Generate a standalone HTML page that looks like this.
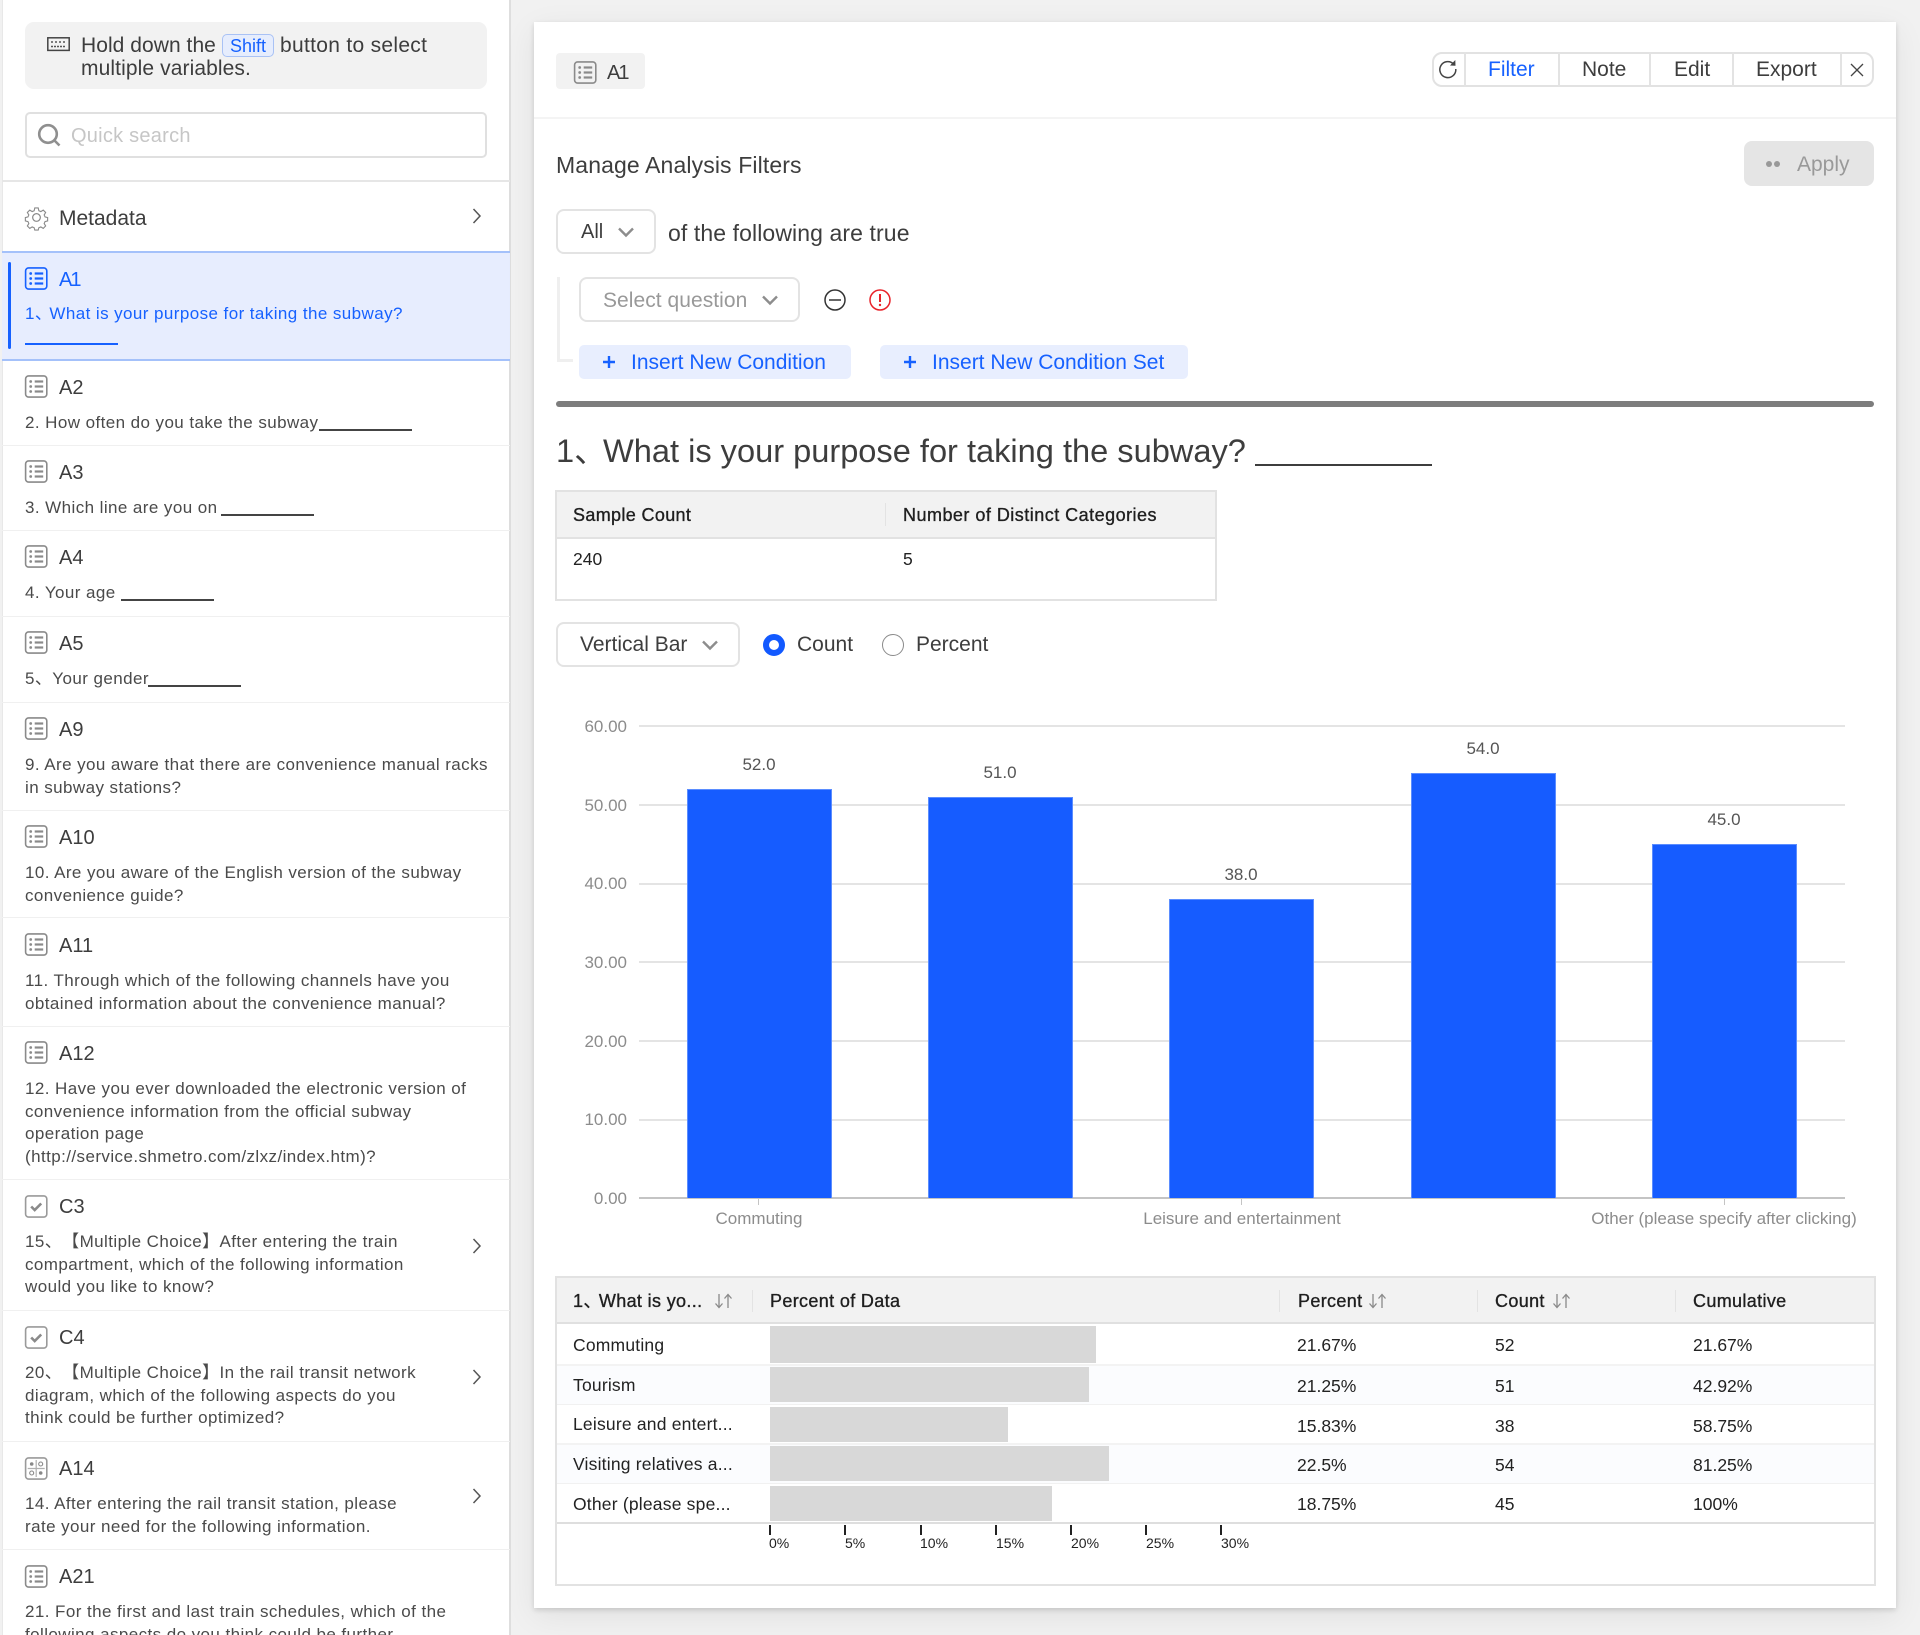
<!DOCTYPE html>
<html><head><meta charset="utf-8"><title>A1</title>
<style>
html,body{margin:0;padding:0}
html{height:1635px;overflow:hidden;background:#f1f1f1}
body{position:relative;width:1920px;height:1635px;overflow:hidden;background:#f1f1f1;font-family:"Liberation Sans","Noto Sans CJK SC",sans-serif;color:#3d3d3d;filter:blur(.3px);text-spacing-trim:space-all}
div,span.a{position:absolute;box-sizing:border-box}
.t{white-space:nowrap;height:26px;line-height:26px}
.h{font-size:20px;color:#3d3d3d;left:59px;margin-top:1px}
.q{font-size:17px;left:25px;letter-spacing:.42px;color:#4a4a4a;margin-top:1px}
.s{height:1px;background:#f0f0f0;left:2px;width:508px}
.m{-webkit-text-stroke:.35px currentColor;color:#1f1f1f;font-size:18px;letter-spacing:.35px}
.c{font-size:17.5px;color:#222}
.g{left:639px;width:1206px;height:2px;background:#e4e4e4}
.b{background:#165cff;border:1px solid #5b8dff;border-bottom:0}
.yl{left:570px;width:57px;text-align:right;color:#8c8c8c;font-size:17px;margin-top:1px}
.v{width:80px;text-align:center;color:#555;font-size:17px;margin-top:1px}
.xl{width:300px;text-align:center;color:#8c8c8c;font-size:17px}
.sel{border:2px solid #e3e3e3;border-radius:8px;background:#fff}
.sp{width:2px;background:#e3e3e3}
.bar{left:770px;background:#d8d8d8}
.tk{width:2px;height:10px;top:1525px;background:#222}
.tl{font-size:14px;color:#222;top:1530px}
.ri{left:556px;width:1319px;height:39px;background:#fbfcfe}
svg{position:absolute;overflow:visible}
</style></head>
<body>
<svg width="0" height="0" style="position:absolute">
<defs>
<symbol id="li" viewBox="-.7 0 23 23" overflow="visible"><rect x=".9" y=".9" width="21.2" height="21.2" rx="3" fill="none" stroke="currentColor" stroke-width="1.6"/><g fill="currentColor"><circle cx="6" cy="6.5" r="1.4"/><circle cx="6" cy="11.5" r="1.4"/><circle cx="6" cy="16.5" r="1.4"/><rect x="10" y="5.4" width="8.5" height="2.2"/><rect x="10" y="10.4" width="8.5" height="2.2"/><rect x="10" y="15.4" width="8.5" height="2.2"/></g></symbol>
<symbol id="ck" viewBox="-.7 0 23 23" overflow="visible"><rect x=".9" y=".9" width="21.2" height="21.2" rx="3" fill="none" stroke="#9a9a9a" stroke-width="1.6"/><path d="M6.5 11.5l3.5 3.5 6.5-6.5" fill="none" stroke="#8a8a8a" stroke-width="2.6"/></symbol>
<symbol id="gr" viewBox="-.7 0 23 23" overflow="visible"><rect x=".9" y=".9" width="21.2" height="21.2" rx="3" fill="none" stroke="#9a9a9a" stroke-width="1.6"/><path d="M11.5 3v17M3 11.5h17" stroke="#b0b0b0" stroke-width="1.2"/><circle cx="7" cy="7" r="1.8" fill="#888"/><circle cx="16" cy="7" r="2" fill="none" stroke="#888" stroke-width="1.1"/><circle cx="7" cy="16" r="2" fill="none" stroke="#888" stroke-width="1.1"/><circle cx="16" cy="16" r="1.8" fill="#888"/></symbol>
<symbol id="cv" viewBox="0 0 16 16" overflow="visible"><path d="M1 4.500l7 7 7-7" fill="none" stroke="#8d8d8d" stroke-width="2.400"/></symbol>
<symbol id="rt" viewBox="0 0 12 18"><path d="M2.5 2l6.5 7-6.5 7" fill="none" stroke="#555" stroke-width="1.5"/></symbol>
<symbol id="so" viewBox="0 0 20 16"><path d="M5 1v13M1.5 10.5L5 14.500l3.500-4M14 15V2M10.500 5.500L14 1.500l3.500 4" fill="none" stroke="#8a8a8a" stroke-width="1.3"/></symbol>
</defs></svg>

<!-- SIDEBAR -->
<div style="left:2px;top:0;width:509px;height:1635px;background:#fff;border-right:2px solid #dedede;border-left:1px solid #e8e8e8"></div>
<div style="left:25px;top:22px;width:462px;height:67px;background:#f2f2f2;border-radius:9px"></div>
<svg style="left:47px;top:37px" width="23" height="15" viewBox="0 0 23 15"><rect x=".8" y=".8" width="21.4" height="12.6" fill="none" stroke="#444" stroke-width="1.5"/><path d="M4 5h2M8 5h2M12 5h2M16 5h3M4 9.500h15" stroke="#555" stroke-width="1.500" stroke-dasharray="2 1"/></svg>
<div class="t" style="left:81px;top:33px;font-size:21px;letter-spacing:.05px">Hold down the</div>
<div class="t" style="left:222px;top:34px;width:52px;height:23px;line-height:22px;background:#e6edfd;border:1.500px solid #a9c2f5;border-radius:5px;color:#1661ff;font-size:18px;text-align:center">Shift</div>
<div class="t" style="left:280px;top:33px;font-size:21px;letter-spacing:.3px">button to select</div>
<div class="t" style="left:81px;top:56px;font-size:21px;letter-spacing:.1px">multiple variables.</div>

<div style="left:25px;top:112px;width:462px;height:46px;border:2px solid #e0e0e0;border-radius:5px;background:#fff"></div>
<svg style="left:37px;top:123px" width="24" height="24" viewBox="0 0 24 24"><circle cx="11" cy="11" r="8.800" fill="none" stroke="#8f8f8f" stroke-width="2.600"/><path d="M17.500 17.500l5 5" stroke="#8f8f8f" stroke-width="2.600"/></svg>
<div class="t" style="left:71px;top:123px;font-size:20px;letter-spacing:.25px;color:#c6c6c6">Quick search</div>
<div style="left:2px;top:180px;width:508px;height:2px;background:#e6e6e6"></div>

<svg style="left:25px;top:205px" width="23" height="24" viewBox="0 0 24 24"><path d="M10 1.500h4l.7 3.200 2.300 1 2.800-1.700 2.800 2.800-1.700 2.800 1 2.300 3 .7v4l-3 .7-1 2.300 1.700 2.800-2.800 2.800-2.800-1.700-2.300 1-.7 2.700h-4l-.7-2.700-2.300-1-2.800 1.700-2.800-2.800 1.700-2.800-1-2.300-3-.7v-4l3-.7 1-2.300-1.700-2.800 2.800-2.800 2.800 1.700 2.300-1z" transform="translate(1.200 1.200) scale(.9)" fill="none" stroke="#8a8a8a" stroke-width="1.300"/><circle cx="12" cy="12.500" r="4" fill="none" stroke="#8a8a8a" stroke-width="1.300"/></svg>
<div class="t" style="left:59px;top:205px;font-size:21px;color:#3d3d3d;margin-top:1px">Metadata</div>
<svg style="left:471px;top:207px" width="12" height="18"><use href="#rt"/></svg>

<!-- A1 -->
<div style="left:2px;top:251px;width:508px;height:110px;background:#e7edfe;border-top:2px solid #a4c1fa;border-bottom:2px solid #a4c1fa"></div>
<div style="left:8px;top:262px;width:3px;height:87px;background:#1661ff;border-radius:2px"></div>
<svg style="left:24px;top:267px;color:#1661ff" width="23" height="23"><use href="#li"/></svg>
<div class="t h" style="top:266px;color:#1661ff;letter-spacing:-2px">A1</div>
<div class="t q" style="top:300px;color:#1661ff">1<span style="letter-spacing:-2.500px">、</span>What is your purpose for taking the subway?</div>
<div style="left:25px;top:343px;width:93px;height:2px;background:#1661ff"></div>

<svg style="left:24px;top:375px;color:#8a8a8a" width="23" height="23"><use href="#li"/></svg>
<div class="t h" style="top:374px">A2</div>
<div class="t q" style="top:409px">2. How often do you take the subway</div>
<div style="left:319px;top:429px;width:93px;height:1.500px;background:#444"></div>
<div class="s" style="top:445px"></div>

<svg style="left:24px;top:460px;color:#8a8a8a" width="23" height="23"><use href="#li"/></svg>
<div class="t h" style="top:459px">A3</div>
<div class="t q" style="top:494px">3. Which line are you on</div>
<div style="left:221px;top:514px;width:93px;height:1.500px;background:#444"></div>
<div class="s" style="top:530px"></div>

<svg style="left:24px;top:545px;color:#8a8a8a" width="23" height="23"><use href="#li"/></svg>
<div class="t h" style="top:544px">A4</div>
<div class="t q" style="top:579px">4. Your age</div>
<div style="left:121px;top:599px;width:93px;height:1.500px;background:#444"></div>
<div class="s" style="top:616px"></div>

<svg style="left:24px;top:631px;color:#8a8a8a" width="23" height="23"><use href="#li"/></svg>
<div class="t h" style="top:630px">A5</div>
<div class="t q" style="top:665px">5、Your gender</div>
<div style="left:148px;top:685px;width:93px;height:1.500px;background:#444"></div>
<div class="s" style="top:702px"></div>

<svg style="left:24px;top:717px;color:#8a8a8a" width="23" height="23"><use href="#li"/></svg>
<div class="t h" style="top:716px">A9</div>
<div class="t q" style="top:751px">9. Are you aware that there are convenience manual racks</div>
<div class="t q" style="top:774px">in subway stations?</div>
<div class="s" style="top:810px"></div>

<svg style="left:24px;top:825px;color:#8a8a8a" width="23" height="23"><use href="#li"/></svg>
<div class="t h" style="top:824px">A10</div>
<div class="t q" style="top:859px">10. Are you aware of the English version of the subway</div>
<div class="t q" style="top:882px">convenience guide?</div>
<div class="s" style="top:917px"></div>

<svg style="left:24px;top:933px;color:#8a8a8a" width="23" height="23"><use href="#li"/></svg>
<div class="t h" style="top:932px">A11</div>
<div class="t q" style="top:967px">11. Through which of the following channels have you</div>
<div class="t q" style="top:990px">obtained information about the convenience manual?</div>
<div class="s" style="top:1026px"></div>

<svg style="left:24px;top:1041px;color:#8a8a8a" width="23" height="23"><use href="#li"/></svg>
<div class="t h" style="top:1040px">A12</div>
<div class="t q" style="top:1075px">12. Have you ever downloaded the electronic version of</div>
<div class="t q" style="top:1098px">convenience information from the official subway</div>
<div class="t q" style="top:1120px">operation page</div>
<div class="t q" style="top:1143px">(http://service.shmetro.com/zlxz/index.htm)?</div>
<div class="s" style="top:1179px"></div>

<svg style="left:24px;top:1195px" width="23" height="23"><use href="#ck"/></svg>
<div class="t h" style="top:1193px">C3</div>
<div class="t q" style="top:1228px">15、【Multiple Choice】After entering the train</div>
<div class="t q" style="top:1251px">compartment, which of the following information</div>
<div class="t q" style="top:1273px">would you like to know?</div>
<svg style="left:471px;top:1237px" width="12" height="18"><use href="#rt"/></svg>
<div class="s" style="top:1310px"></div>

<svg style="left:24px;top:1326px" width="23" height="23"><use href="#ck"/></svg>
<div class="t h" style="top:1324px">C4</div>
<div class="t q" style="top:1359px">20、【Multiple Choice】In the rail transit network</div>
<div class="t q" style="top:1382px">diagram, which of the following aspects do you</div>
<div class="t q" style="top:1404px">think could be further optimized?</div>
<svg style="left:471px;top:1368px" width="12" height="18"><use href="#rt"/></svg>
<div class="s" style="top:1441px"></div>

<svg style="left:24px;top:1457px" width="23" height="23"><use href="#gr"/></svg>
<div class="t h" style="top:1455px">A14</div>
<div class="t q" style="top:1490px">14. After entering the rail transit station, please</div>
<div class="t q" style="top:1513px">rate your need for the following information.</div>
<svg style="left:471px;top:1487px" width="12" height="18"><use href="#rt"/></svg>
<div class="s" style="top:1549px"></div>

<svg style="left:24px;top:1565px;color:#8a8a8a" width="23" height="23"><use href="#li"/></svg>
<div class="t h" style="top:1563px">A21</div>
<div class="t q" style="top:1598px">21. For the first and last train schedules, which of the</div>
<div class="t q" style="top:1621px">following aspects do you think could be further</div>

<!-- MAIN PANEL -->
<div style="left:534px;top:22px;width:1362px;height:1586px;background:#fff;box-shadow:0 2px 5px rgba(0,0,0,.14),0 8px 30px rgba(0,0,0,.07)"></div>

<div style="left:556px;top:53px;width:89px;height:36px;background:#f2f2f2;border-radius:4px"></div>
<svg style="left:573px;top:61px;color:#8a8a8a" width="23" height="23"><use href="#li"/></svg>
<div class="t" style="left:607px;top:60px;font-size:20px;letter-spacing:-2px">A1</div>
<div style="left:534px;top:117px;width:1362px;height:2px;background:#f4f4f4"></div>

<div style="left:1432px;top:52px;width:442px;height:35px;border:2px solid #e2e2e2;border-radius:10px;background:#fff"></div>
<div class="sp" style="left:1464px;top:52px;height:35px"></div>
<div class="sp" style="left:1558px;top:52px;height:35px"></div>
<div class="sp" style="left:1649px;top:52px;height:35px"></div>
<div class="sp" style="left:1732px;top:52px;height:35px"></div>
<div class="sp" style="left:1840px;top:52px;height:35px"></div>
<svg style="left:1438px;top:59px" width="20" height="20" viewBox="0 0 20 20"><path d="M15.800 5.300A8 8 0 1 0 17.800 10" fill="none" stroke="#444" stroke-width="1.500"/><path d="M12 6.500l5.500.2-.2-5.700z" fill="#444"/></svg>
<div class="t" style="left:1488px;top:57px;font-size:21px;color:#1661ff">Filter</div>
<div class="t" style="left:1582px;top:57px;font-size:21px">Note</div>
<div class="t" style="left:1674px;top:57px;font-size:21px">Edit</div>
<div class="t" style="left:1756px;top:57px;font-size:21px">Export</div>
<svg style="left:1850px;top:63px" width="14" height="14" viewBox="0 0 14 14"><path d="M1 1l12 12M13 1L1 13" stroke="#444" stroke-width="1.300"/></svg>

<div class="t" style="left:556px;top:152px;font-size:23px;letter-spacing:.12px;color:#3d3d3d">Manage Analysis Filters</div>
<div style="left:1744px;top:141px;width:130px;height:45px;background:#e5e5e5;border-radius:8px"></div>
<div style="left:1766px;top:161px;width:6px;height:6px;border-radius:50%;background:#999"></div>
<div style="left:1774px;top:161px;width:6px;height:6px;border-radius:50%;background:#999"></div>
<div class="t" style="left:1797px;top:152px;font-size:21px;color:#999">Apply</div>

<div class="sel" style="left:556px;top:209px;width:100px;height:45px"></div>
<div class="t" style="left:581px;top:219px;font-size:20px">All</div>
<svg style="left:618px;top:224px" width="16" height="16"><use href="#cv"/></svg>
<div class="t" style="left:668px;top:220px;font-size:23px;letter-spacing:.1px">of the following are true</div>

<div style="left:557px;top:277px;width:3px;height:85px;background:#efefef"></div>
<div style="left:557px;top:359px;width:16px;height:3px;background:#efefef"></div>
<div class="sel" style="left:579px;top:277px;width:221px;height:45px"></div>
<div class="t" style="left:603px;top:288px;font-size:21px;letter-spacing:.05px;color:#999">Select question</div>
<svg style="left:762px;top:292px" width="16" height="16"><use href="#cv"/></svg>
<svg style="left:824px;top:289px" width="22" height="22" viewBox="0 0 22 22"><circle cx="11" cy="11" r="10" fill="none" stroke="#333" stroke-width="1.500"/><path d="M5 11h12" stroke="#333" stroke-width="1.500"/></svg>
<svg style="left:869px;top:289px" width="22" height="22" viewBox="0 0 22 22"><circle cx="11" cy="11" r="10" fill="none" stroke="#e8232a" stroke-width="1.500"/><path d="M11 5v8" stroke="#e8232a" stroke-width="2"/><circle cx="11" cy="16" r="1.200" fill="#e8232a"/></svg>

<div style="left:579px;top:345px;width:272px;height:34px;background:#e8eefe;border-radius:5px"></div>
<div style="left:880px;top:345px;width:308px;height:34px;background:#e8eefe;border-radius:5px"></div>
<svg style="left:603px;top:356px" width="12" height="12"><path d="M6 0v12M0 6h12" stroke="#1661ff" stroke-width="2.400"/></svg>
<svg style="left:904px;top:356px" width="12" height="12"><path d="M6 0v12M0 6h12" stroke="#1661ff" stroke-width="2.400"/></svg>
<div class="t" style="left:631px;top:350px;font-size:21px;color:#1661ff">Insert New Condition</div>
<div class="t" style="left:932px;top:350px;font-size:21px;color:#1661ff">Insert New Condition Set</div>

<div style="left:556px;top:401px;width:1318px;height:6px;background:#7d7d7d;border-radius:3px"></div>

<div class="t" style="left:556px;top:431px;height:40px;line-height:40px;font-size:32.600px;color:#3d3d3d">1<span style="letter-spacing:-3.700px">、</span>What is your purpose for taking the subway?</div>
<div style="left:1255px;top:464px;width:177px;height:2px;background:#3d3d3d"></div>

<!-- STATS TABLE -->
<div style="left:555px;top:490px;width:662px;height:111px;border:2px solid #e2e2e2;background:#fff"></div>
<div style="left:557px;top:492px;width:658px;height:47px;background:#f2f2f2;border-bottom:2px solid #e2e2e2"></div>
<div class="sp" style="left:885px;top:503px;height:23px;width:1px"></div>
<div class="t m" style="left:573px;top:502px">Sample Count</div>
<div class="t m" style="left:903px;top:502px;letter-spacing:.48px">Number of Distinct Categories</div>
<div class="t c" style="left:573px;top:546px">240</div>
<div class="t c" style="left:903px;top:546px">5</div>

<!-- CHART CONTROLS -->
<div class="sel" style="left:556px;top:622px;width:184px;height:45px"></div>
<div class="t" style="left:580px;top:632px;font-size:21px">Vertical Bar</div>
<svg style="left:702px;top:637px" width="16" height="16"><use href="#cv"/></svg>
<div style="left:763px;top:634px;width:22px;height:22px;border-radius:50%;border:6.500px solid #1259ff;background:#fff"></div>
<div class="t" style="left:797px;top:632px;font-size:21px">Count</div>
<div style="left:882px;top:634px;width:22px;height:22px;border-radius:50%;border:1.500px solid #8a8a8a;background:#fff"></div>
<div class="t" style="left:916px;top:632px;font-size:21px">Percent</div>

<!-- CHART -->
<div class="g" style="top:725px"></div>
<div class="g" style="top:804px"></div>
<div class="g" style="top:883px"></div>
<div class="g" style="top:961px"></div>
<div class="g" style="top:1040px"></div>
<div class="g" style="top:1119px"></div>
<div class="g" style="top:1197px;background:#c4c4c4"></div>
<div class="t yl" style="top:713px">60.00</div>
<div class="t yl" style="top:792px">50.00</div>
<div class="t yl" style="top:870px">40.00</div>
<div class="t yl" style="top:949px">30.00</div>
<div class="t yl" style="top:1028px">20.00</div>
<div class="t yl" style="top:1106px">10.00</div>
<div class="t yl" style="top:1185px">0.00</div>

<div class="b" style="left:687px;top:789px;width:145px;height:409px"></div>
<div class="b" style="left:928px;top:797px;width:145px;height:401px"></div>
<div class="b" style="left:1169px;top:899px;width:145px;height:299px"></div>
<div class="b" style="left:1411px;top:773px;width:145px;height:425px"></div>
<div class="b" style="left:1652px;top:844px;width:145px;height:354px"></div>
<div class="t v" style="left:719px;top:751px">52.0</div>
<div class="t v" style="left:960px;top:759px">51.0</div>
<div class="t v" style="left:1201px;top:861px">38.0</div>
<div class="t v" style="left:1443px;top:735px">54.0</div>
<div class="t v" style="left:1684px;top:806px">45.0</div>
<div style="left:758px;top:1199px;width:1px;height:6px;background:#c4c4c4"></div>
<div style="left:1241px;top:1199px;width:1px;height:6px;background:#c4c4c4"></div>
<div style="left:1724px;top:1199px;width:1px;height:6px;background:#c4c4c4"></div>
<div class="t xl" style="left:609px;top:1206px">Commuting</div>
<div class="t xl" style="left:1092px;top:1206px">Leisure and entertainment</div>
<div class="t xl" style="left:1574px;top:1206px">Other (please specify after clicking)</div>

<!-- DATA TABLE -->
<div style="left:555px;top:1276px;width:1321px;height:310px;border:2px solid #e2e2e2;background:#fff"></div>
<div style="left:557px;top:1278px;width:1317px;height:46px;background:#f2f2f2;border-bottom:2px solid #e0e0e0"></div>
<div class="ri" style="top:1365px;left:557px;width:1317px"></div>
<div class="ri" style="top:1445px;left:557px;width:1317px"></div>
<div style="left:557px;top:1364px;width:1317px;height:2px;background:#f3f3f3"></div>
<div style="left:557px;top:1404px;width:1317px;height:1px;background:#f1f1f1"></div>
<div style="left:557px;top:1443px;width:1317px;height:2px;background:#f3f3f3"></div>
<div style="left:557px;top:1483px;width:1317px;height:1px;background:#f1f1f1"></div>
<div style="left:557px;top:1522px;width:1317px;height:2px;background:#dedede"></div>

<div class="sp" style="left:752px;top:1290px;height:22px;width:1px"></div>
<div class="sp" style="left:1279px;top:1290px;height:22px;width:1px"></div>
<div class="sp" style="left:1477px;top:1290px;height:22px;width:1px"></div>
<div class="sp" style="left:1675px;top:1290px;height:22px;width:1px"></div>
<div class="t m" style="left:573px;top:1288px">1<span style="letter-spacing:-2.500px">、</span>What is yo...</div>
<svg style="left:714px;top:1293px" width="20" height="16"><use href="#so"/></svg>
<div class="t m" style="left:770px;top:1288px">Percent of Data</div>
<div class="t m" style="left:1298px;top:1288px">Percent</div>
<svg style="left:1368px;top:1293px" width="20" height="16"><use href="#so"/></svg>
<div class="t m" style="left:1495px;top:1288px">Count</div>
<svg style="left:1552px;top:1293px" width="20" height="16"><use href="#so"/></svg>
<div class="t m" style="left:1693px;top:1288px">Cumulative</div>

<div class="bar" style="top:1326px;height:37px;width:326px"></div>
<div class="bar" style="top:1367px;height:35px;width:319px"></div>
<div class="bar" style="top:1407px;height:35px;width:238px"></div>
<div class="bar" style="top:1446px;height:35px;width:339px"></div>
<div class="bar" style="top:1486px;height:35px;width:282px"></div>

<div class="t c" style="left:573px;top:1332px;letter-spacing:.2px">Commuting</div>
<div class="t c" style="left:573px;top:1372px;letter-spacing:.2px">Tourism</div>
<div class="t c" style="left:573px;top:1411px;letter-spacing:.2px">Leisure and entert...</div>
<div class="t c" style="left:573px;top:1451px;letter-spacing:.2px">Visiting relatives a...</div>
<div class="t c" style="left:573px;top:1491px;letter-spacing:.2px">Other (please spe...</div>

<div class="t c" style="left:1297px;top:1332px">21.67%</div>
<div class="t c" style="left:1297px;top:1373px">21.25%</div>
<div class="t c" style="left:1297px;top:1413px">15.83%</div>
<div class="t c" style="left:1297px;top:1452px">22.5%</div>
<div class="t c" style="left:1297px;top:1491px">18.75%</div>

<div class="t c" style="left:1495px;top:1332px">52</div>
<div class="t c" style="left:1495px;top:1373px">51</div>
<div class="t c" style="left:1495px;top:1413px">38</div>
<div class="t c" style="left:1495px;top:1452px">54</div>
<div class="t c" style="left:1495px;top:1491px">45</div>

<div class="t c" style="left:1693px;top:1332px">21.67%</div>
<div class="t c" style="left:1693px;top:1373px">42.92%</div>
<div class="t c" style="left:1693px;top:1413px">58.75%</div>
<div class="t c" style="left:1693px;top:1452px">81.25%</div>
<div class="t c" style="left:1693px;top:1491px">100%</div>

<div class="tk" style="left:769px"></div>
<div class="tk" style="left:844px"></div>
<div class="tk" style="left:920px"></div>
<div class="tk" style="left:995px"></div>
<div class="tk" style="left:1070px"></div>
<div class="tk" style="left:1145px"></div>
<div class="tk" style="left:1220px"></div>
<div class="t tl" style="left:769px">0%</div>
<div class="t tl" style="left:845px">5%</div>
<div class="t tl" style="left:920px">10%</div>
<div class="t tl" style="left:996px">15%</div>
<div class="t tl" style="left:1071px">20%</div>
<div class="t tl" style="left:1146px">25%</div>
<div class="t tl" style="left:1221px">30%</div>
</body></html>
